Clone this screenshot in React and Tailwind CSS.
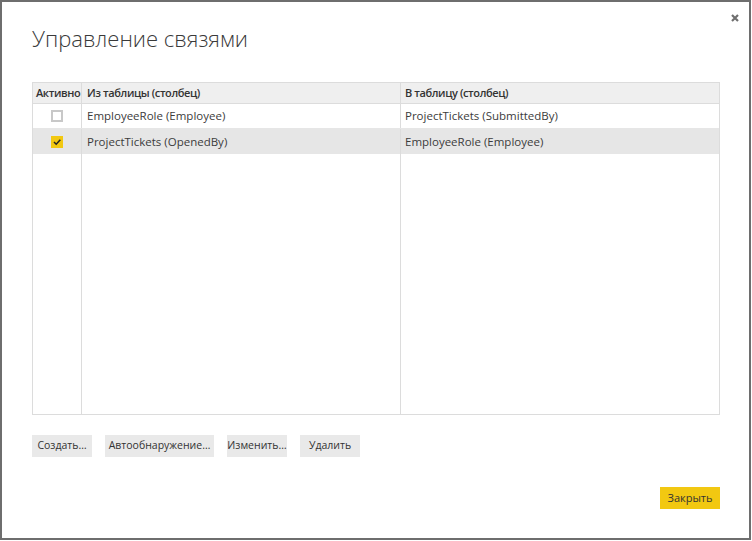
const rows = [
  { active: false, from: "EmployeeRole (Employee)", to: "ProjectTickets (SubmittedBy)" },
  { active: true, from: "ProjectTickets (OpenedBy)", to: "EmployeeRole (Employee)" },
];

const actions = [
  { label: "Создать…", w: "w-[60px]" },
  { label: "Автообнаружение…", w: "w-[109px]" },
  { label: "Изменить…", w: "w-[60px]" },
  { label: "Удалить", w: "w-[60px]" },
];

export default function App() {
  return (
    <div className="w-[752px] h-[541px] bg-white font-['Segoe_UI','Open_Sans',sans-serif]">
      <div className="relative w-[751px] h-[540px] border-2 border-[#6e6e6e] bg-white text-[#333]">
        {/* close */}
        <button className="absolute top-[9px] right-[8px] w-[13px] h-[13px] flex items-center justify-center">
          <svg width="8" height="8" viewBox="0 0 8 8">
            <path d="M1 1 L7 7 M7 1 L1 7" stroke="#6f6f6f" strokeWidth="2.2" />
          </svg>
        </button>

        <h1 className="pl-[30px] pt-[21px] text-[22px] leading-[30px] font-light text-[#3a3a3a]">
          Управление связями
        </h1>

        {/* table */}
        <div className="ml-[30px] mt-[29px] w-[688px] h-[333px] border border-[#dcdcdc] flex flex-col text-[11.5px]">
          <div className="flex h-[21px] bg-[#efefef] border-b border-[#dcdcdc] font-semibold text-[11px] tracking-[-0.4px] text-[#333]">
            <div className="w-[49px] border-r border-[#dcdcdc] flex items-center pl-[3px]">Активно</div>
            <div className="w-[319px] border-r border-[#dcdcdc] flex items-center pl-[5px]">Из таблицы (столбец)</div>
            <div className="flex-1 flex items-center pl-[4px]">В таблицу (столбец)</div>
          </div>
          {rows.map((r, i) => (
            <div
              key={i}
              className={`flex h-[25px] text-[#3c3c3c] ${r.active ? "bg-[#e6e6e6]" : "bg-white border-b border-[#e6e6e6]"}`}
            >
              <div className="w-[49px] border-r border-[#dcdcdc] flex items-center justify-center">
                {r.active ? (
                  <span className="w-[12px] h-[12px] bg-[#f2c811] flex items-center justify-center">
                    <svg width="10" height="10" viewBox="0 0 10 10">
                      <path d="M2 5 L4.2 7.2 L8.3 2.8" stroke="#222" strokeWidth="1.5" fill="none" />
                    </svg>
                  </span>
                ) : (
                  <span className="w-[12px] h-[12px] border-2 border-[#c8c8c8] bg-white" />
                )}
              </div>
              <div className="w-[319px] border-r border-[#dcdcdc] flex items-center pl-[5px]">{r.from}</div>
              <div className="flex-1 flex items-center pl-[4px]">{r.to}</div>
            </div>
          ))}
          <div className="flex flex-1">
            <div className="w-[49px] border-r border-[#dcdcdc]" />
            <div className="w-[319px] border-r border-[#dcdcdc]" />
            <div className="flex-1" />
          </div>
        </div>

        {/* actions */}
        <div className="ml-[30px] mt-[20px] flex gap-[13px]">
          {actions.map((a) => (
            <button
              key={a.label}
              className={`${a.w} h-[22px] bg-[#e9e9e9] text-[10.5px] text-[#333] flex items-center justify-center`}
            >
              {a.label}
            </button>
          ))}
        </div>

        <div className="flex justify-end pr-[29px] mt-[30px]">
          <button className="w-[60px] h-[22px] bg-[#f2c811] text-[11px] text-[#333] flex items-center justify-center">
            Закрыть
          </button>
        </div>
      </div>
    </div>
  );
}
